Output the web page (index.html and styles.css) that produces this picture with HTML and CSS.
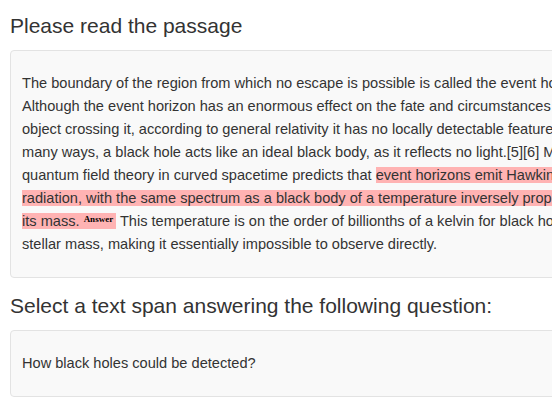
FILE: index.html
```html
<!DOCTYPE html>
<html>
<head>
<meta charset="utf-8">
<link rel="stylesheet" href="styles.css">
</head>
<body>
<div class="page">
  <h3 class="title title-first">Please read the passage</h3>
  <div class="well">
    <p class="passage">The boundary of the region from which no escape is possible is called the event horizon. Although the event horizon has an enormous effect on the fate and circumstances of an object crossing it, according to general relativity it has no locally detectable features.[4] In many ways, a black hole acts like an ideal black body, as it reflects no light.[5][6] Moreover, quantum field theory in curved spacetime predicts that <span class="hl">event horizons emit Hawking radiation, with the same spectrum as a black body of a temperature inversely proportional to its mass. <sup class="tag">Answer</sup></span> This temperature is on the order of billionths of a kelvin for black holes of stellar mass, making it essentially impossible to observe directly.</p>
  </div>
  <h3 class="title">Select a text span answering the following question:</h3>
  <div class="well">
    <p class="question">How black holes could be detected?</p>
  </div>
</div>
</body>
</html>
```
FILE: styles.css
```css
html, body { margin: 0; padding: 0; overflow: hidden; background: #fff; }
body { font-family: "Liberation Sans", Arial, sans-serif; color: #333; }
.page { padding: 0 10px; }
.title { font-size: 21px; font-weight: 400; margin: 16px 0 13px; line-height: 23px; color: #333; white-space: nowrap; }
.title-first { margin-top: 14px; }
.well { width: 599px; background: #f9f9f9; border: 1px solid #e3e3e3; border-radius: 4px; padding: 10px 11px; }
.passage, .question { font-size: 14.6px; line-height: 23px; margin: 11px 0; }
.hl { background: #ffb3b3; }
.tag { font-family: "Liberation Serif", serif; font-weight: 700; font-size: 9px; color: #000; vertical-align: 4px; line-height: 0; padding-right: 3px; }
```
